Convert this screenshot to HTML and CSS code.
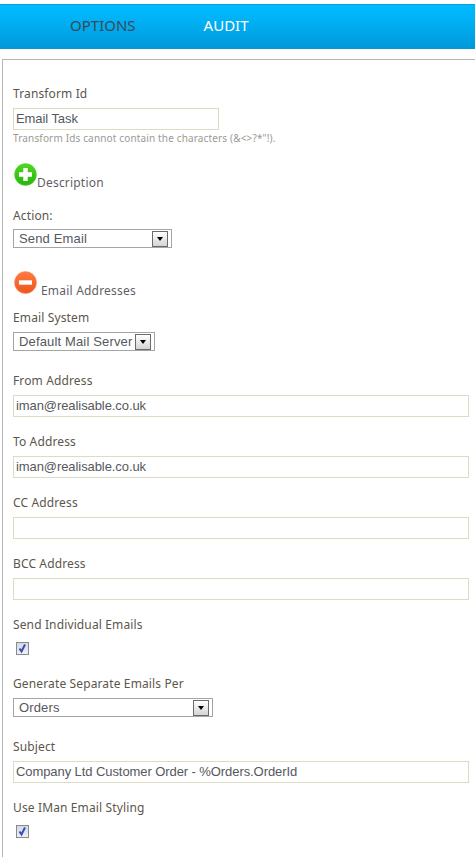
FILE: index.html
```html
<!DOCTYPE html>
<html lang="en">
<head>
<meta charset="utf-8">
<title>Email Task</title>
<link rel="stylesheet" href="styles.css">
</head>
<body>
<nav class="topbar">
  <a class="tab tab-active">OPTIONS</a>
  <a class="tab">AUDIT</a>
</nav>
<main class="panel">
  <div class="label first">Transform Id</div>
  <div class="input short">Email Task</div>
  <div class="hint">Transform Ids cannot contain the characters (&amp;&lt;&gt;?*"!).</div>

  <div class="section sec-desc">
    <svg class="round" viewBox="0 0 23 23"><defs><linearGradient id="g" x1="0" y1="0" x2="0" y2="1"><stop offset="0" stop-color="#4fd81f"/><stop offset="1" stop-color="#27b40e"/></linearGradient></defs><circle cx="11.5" cy="11.5" r="11" fill="url(#g)" stroke="#5fd83a" stroke-width="0.5"/><path d="M9.300 5h4.400v4.300h4.300v4.400h-4.300v4.300h-4.400v-4.300h-4.300v-4.400h4.300z" fill="#fff"/></svg>
    <span>Description</span>
  </div>

  <div class="label l-action">Action:</div>
  <div class="select s-action"><span class="sel-text">Send Email</span><span class="arrow"></span></div>

  <div class="section sec-email">
    <svg class="round" viewBox="0 0 23 23"><defs><linearGradient id="r" x1="0" y1="0" x2="0" y2="1"><stop offset="0" stop-color="#ff7b42"/><stop offset="1" stop-color="#f05518"/></linearGradient></defs><circle cx="11.5" cy="11.500" r="11" fill="url(#r)" stroke="#ff8f62" stroke-width="0.5"/><rect x="5" y="9.300" width="13" height="4.400" fill="#fff"/></svg>
    <span class="sec-gap">Email Addresses</span>
  </div>

  <div class="label l-system">Email System</div>
  <div class="select s-system"><span class="sel-text">Default Mail Server</span><span class="arrow"></span></div>

  <div class="label l-from">From Address</div>
  <div class="input">iman@realisable.co.uk</div>
  <div class="label l-to">To Address</div>
  <div class="input">iman@realisable.co.uk</div>
  <div class="label l-next">CC Address</div>
  <div class="input"></div>
  <div class="label l-next">BCC Address</div>
  <div class="input"></div>
  <div class="label l-next">Send Individual Emails</div>
  <div class="check"><svg viewBox="0 0 11 11"><path d="M2.500 5.500l2 3 3.500-7" fill="none" stroke="#3550b0" stroke-width="2"/></svg></div>
  <div class="label l-gen">Generate Separate Emails Per</div>
  <div class="select s-gen"><span class="sel-text">Orders</span><span class="arrow"></span></div>
  <div class="label l-subject">Subject</div>
  <div class="input">Company Ltd Customer Order - %Orders.OrderId</div>
  <div class="label l-next">Use IMan Email Styling</div>
  <div class="check"><svg viewBox="0 0 11 11"><path d="M2.500 5.500l2 3 3.500-7" fill="none" stroke="#3550b0" stroke-width="2"/></svg></div>
</main>
</body>
</html>
```
FILE: styles.css
```css
html, body { margin: 0; padding: 0; background: #fff; }
body { height: 857px; overflow: hidden; font-family: "Noto Sans", sans-serif; color: #55504a; padding-top: 4px; box-sizing: border-box; }
.topbar { height: 45px; display: flex; align-items: center; padding-left: 70px; gap: 68px; background: linear-gradient(#00baff, #00b6fb 20%, #0098d8); border-top: 1px solid #0f9fd8; box-sizing: border-box; }
.tab { font: 15px "Noto Sans", sans-serif; color: #fff; position: relative; top: -2px; }
.tab-active { color: #3c4a58; }
.panel { margin: 10px 0 0 2px; border-top: 1px solid #b5b5b5; border-left: 1px solid #b5b5b5; padding: 0 6px 0 10px; height: 798px; box-sizing: border-box; }
.label { font-size: 12px; line-height: 14px; color: #5c564c; letter-spacing: 0.13px; white-space: nowrap; padding-top: 1px; margin-bottom: -1px; }
.first { margin-top: 26px; }
.input { margin-top: 8px; height: 22px; box-sizing: border-box; border: 1px solid #dcdcc4; padding-left: 2px; font: 13px/20px "Liberation Sans", sans-serif; letter-spacing: -0.08px; color: #55585c; background: #fff; width: 456px; }
.short { width: 206px; }
.hint { font-size: 10px; line-height: 12px; margin-top: 2px; color: #9a9a92; letter-spacing: 0.15px; white-space: nowrap; }
.section { display: flex; align-items: flex-end; font-size: 12px; line-height: 14px; color: #5f5f66; letter-spacing: 0.2px; }
.round { width: 23px; height: 23px; display: block; margin-left: 1px; }
.sec-desc { margin-top: 19px; }
.sec-desc span { position: relative; top: 4px; }
.sec-email { margin-top: 23px; }
.sec-email span { position: relative; top: 4px; }
.sec-gap { margin-left: 4px; }
.l-action { margin-top: 22px; }
.select { margin-top: 7px; height: 19px; box-sizing: border-box; border: 1px solid #a5a5a5; display: flex; align-items: center; justify-content: space-between; padding: 0 3px 0 5px; font: 13px "Liberation Sans", sans-serif; letter-spacing: 0.15px; color: #55585c; background: #fff; white-space: nowrap; }
.s-action { width: 159px; }
.s-system { width: 142px; margin-top: 8px; }
.s-gen { width: 200px; margin-top: 8px; }
.arrow { width: 16px; height: 16px; box-sizing: border-box; border: 1px solid #6a6a6a; background: linear-gradient(#fff, #d4d4d4); position: relative; flex: none; }
.arrow::after { content: ""; position: absolute; left: 4px; top: 5px; border: 3.500px solid transparent; border-top: 4px solid #000; border-bottom: 0; }
.l-system { margin-top: 16px; }
.l-from { margin-top: 22px; }
.l-to { margin-top: 17px; }
.l-next { margin-top: 17px; }
.l-gen { margin-top: 21px; }
.l-subject { margin-top: 22px; }
.check { margin: 11px 0 0 3px; width: 13px; height: 13px; box-sizing: border-box; border: 1px solid #8a8a8a; background: linear-gradient(#d4d8e6, #eef0f8); }
.check svg { display: block; width: 11px; height: 11px; }
```
